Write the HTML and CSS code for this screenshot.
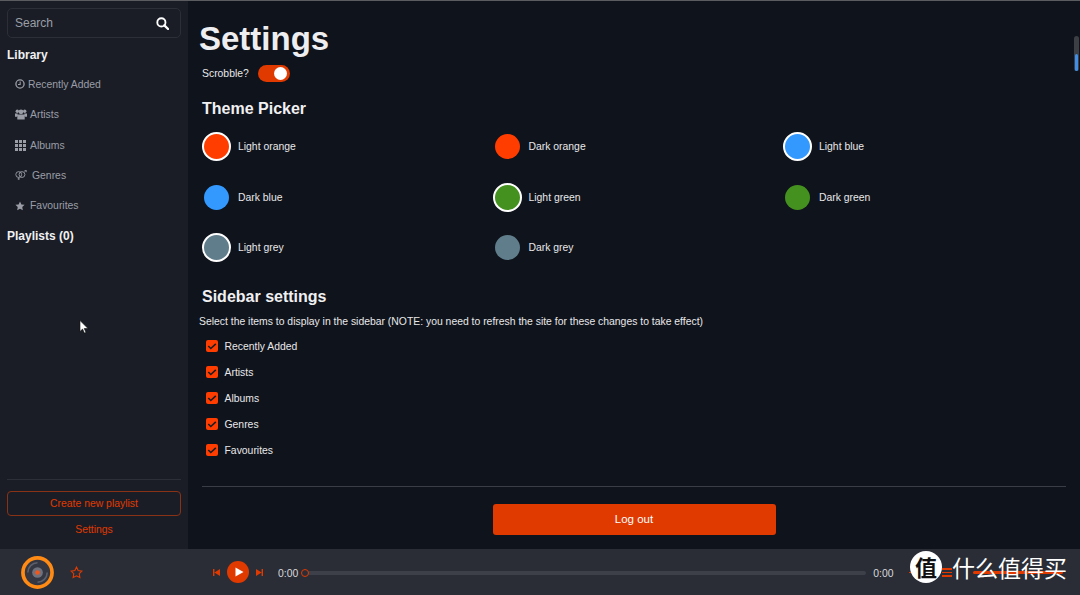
FILE: index.html
```html
<!DOCTYPE html>
<html lang="en">
<head>
    <meta charset="UTF-8">
    <title>Settings</title>
    <link rel="stylesheet" href="styles.css">
</head>
<body>
    <div class="app">
        <div class="content">
            <aside class="sidebar">
                <div class="search">
                    <span>Search</span>
                    <svg class="search-icon" viewBox="0 0 14 14"><circle cx="5.8" cy="5.8" r="4.4" fill="none" stroke="#fff" stroke-width="2"/><path d="M9 9l4 4" stroke="#fff" stroke-width="2.4" stroke-linecap="round"/></svg>
                </div>
                <h4 class="side-title">Library</h4>
                <a class="side-item">
                    <svg class="side-icon" viewBox="0 0 12 12"><circle cx="6" cy="6" r="4.9" fill="none" stroke="#9a9da6" stroke-width="1.6"/><path d="M6.200 3V6.500H3.600" fill="none" stroke="#9a9da6" stroke-width="1.3"/></svg>
                    <span>Recently Added</span>
                </a>
                <a class="side-item">
                    <svg class="side-icon users" viewBox="0 0 12 11"><circle cx="2.300" cy="2.200" r="1.700" fill="#9a9da6"/><circle cx="9.700" cy="2.200" r="1.700" fill="#9a9da6"/><circle cx="6" cy="2.800" r="2.400" fill="#9a9da6"/><path d="M0 4.500h2.800L2 7.800H0zM12 4.500H9.200L10 7.800H12zM3.200 5.600h5.600c.6 0 .9.500.9 1V10.500H2.300V6.600c0-.5.400-1 .9-1z" fill="#9a9da6"/></svg>
                    <span>Artists</span>
                </a>
                <a class="side-item">
                    <svg class="side-icon wide" viewBox="0 0 11 11"><path d="M0 0h3v3H0zM4 0h3v3H4zM8 0h3v3H8zM0 4h3v3H0zM4 4h3v3H4zM8 4h3v3H8zM0 8h3v3H0zM4 8h3v3H4zM8 8h3v3H8z" fill="#9a9da6"/></svg>
                    <span>Albums</span>
                </a>
                <a class="side-item">
                    <svg class="side-icon wider" viewBox="0 0 13 11"><circle cx="4" cy="5" r="3.200" fill="none" stroke="#9a9da6"/><circle cx="7.600" cy="5" r="3.200" fill="none" stroke="#9a9da6"/><path d="M4 8.200v2.600M2.800 9.800h2.400M10 2.600l2-2M10.400.5H12.300V2.400" fill="none" stroke="#9a9da6" stroke-width=".9"/></svg>
                    <span>Genres</span>
                </a>
                <a class="side-item">
                    <svg class="side-icon star" viewBox="0 0 12 12"><path d="M6 .6l1.700 3.500 3.800.5-2.800 2.700.7 3.800L6 9.300l-3.400 1.800.7-3.800L.5 4.600l3.800-.5z" fill="#9a9da6"/></svg>
                    <span>Favourites</span>
                </a>
                <h4 class="side-title playlists">Playlists (0)</h4>
                <div class="side-bottom">
                    <button class="new-playlist">Create new playlist</button>
                    <a class="settings-link">Settings</a>
                </div>
            </aside>

            <main class="main">
                <h1>Settings</h1>
                <div class="scrobble">
                    <span>Scrobble?</span>
                    <div class="toggle"><div class="toggle-thumb"></div></div>
                </div>

                <h3>Theme Picker</h3>
                <div class="themes">
                    <div class="theme"><div class="swatch-box"><div class="swatch orange picked"></div></div>Light orange</div>
                    <div class="theme"><div class="swatch-box"><div class="swatch orange"></div></div>Dark orange</div>
                    <div class="theme"><div class="swatch-box"><div class="swatch blue picked"></div></div>Light blue</div>
                    <div class="theme"><div class="swatch-box"><div class="swatch blue"></div></div>Dark blue</div>
                    <div class="theme"><div class="swatch-box"><div class="swatch green picked"></div></div>Light green</div>
                    <div class="theme"><div class="swatch-box"><div class="swatch green"></div></div>Dark green</div>
                    <div class="theme"><div class="swatch-box"><div class="swatch grey picked"></div></div>Light grey</div>
                    <div class="theme"><div class="swatch-box"><div class="swatch grey"></div></div>Dark grey</div>
                </div>

                <h3 class="sidebar-heading">Sidebar settings</h3>
                <p class="note">Select the items to display in the sidebar (NOTE: you need to refresh the site for these changes to take effect)</p>
                <div class="checks">
                    <div class="check-row"><div class="check"><svg viewBox="0 0 12 12"><path d="M2.300 6l2.500 2.500L9.800 3.800" fill="none" stroke="#1a1d26" stroke-width="1.600"/></svg></div>Recently Added</div>
                    <div class="check-row"><div class="check"><svg viewBox="0 0 12 12"><path d="M2.300 6l2.500 2.500L9.800 3.800" fill="none" stroke="#1a1d26" stroke-width="1.600"/></svg></div>Artists</div>
                    <div class="check-row"><div class="check"><svg viewBox="0 0 12 12"><path d="M2.300 6l2.500 2.500L9.800 3.800" fill="none" stroke="#1a1d26" stroke-width="1.600"/></svg></div>Albums</div>
                    <div class="check-row"><div class="check"><svg viewBox="0 0 12 12"><path d="M2.300 6l2.500 2.500L9.800 3.800" fill="none" stroke="#1a1d26" stroke-width="1.600"/></svg></div>Genres</div>
                    <div class="check-row"><div class="check"><svg viewBox="0 0 12 12"><path d="M2.300 6l2.500 2.500L9.800 3.800" fill="none" stroke="#1a1d26" stroke-width="1.600"/></svg></div>Favourites</div>
                </div>
                <hr class="rule">
                <div class="logout-row"><button class="logout">Log out</button></div>
            </main>
        </div>

        <footer class="player">
            <svg class="disc" viewBox="0 0 34 34">
                <circle cx="17" cy="17" r="15" fill="#343741" stroke="#ff8a14" stroke-width="3.800"/>
                <path d="M17 7a10 10 0 0 0-10 10M17 27a10 10 0 0 0 10-10" fill="none" stroke="#5d606a" stroke-width="1.600"/>
                <circle cx="17" cy="17" r="5.500" fill="#6f727c"/>
                <circle cx="17" cy="17" r="2.400" fill="#f0561a"/>
            </svg>
            <svg class="fav" viewBox="0 0 12 12"><path d="M6 1l1.500 3.200 3.500.5-2.500 2.400.6 3.500L6 9l-3.100 1.600.6-3.500L1 4.700l3.500-.5z" fill="none" stroke="#e03a00" stroke-width="1"/></svg>
            <div class="controls">
                <svg class="skip" viewBox="0 0 8 10"><path d="M0 1h1.600v8H0zM8 1v8L1.600 5z" fill="#e03a00"/></svg>
                <div class="play"><svg viewBox="0 0 10 10"><path d="M1.500 0.500L9.500 5l-8 4.500z" fill="#fff"/></svg></div>
                <svg class="skip" viewBox="0 0 8 10"><path d="M8 1H6.400v8H8zM0 1v8l6.400-4z" fill="#e03a00"/></svg>
            </div>
            <span class="time">0:00</span>
            <div class="track"><div class="track-thumb"></div></div>
            <span class="time end">0:00</span>
        </footer>

        <!-- volume bits under the watermark -->
        <div class="vol-stub"></div>
        <div class="queue-lines"><i></i><i></i><i></i></div>
        <div class="vol-line"></div>
        <div class="watermark">
            <div class="wm-badge">值</div>
            <span class="wm-text">什么值得买</span>
        </div>

        <div class="scrollbar"><div class="scrollbar-fill"></div></div>
        <svg class="cursor" viewBox="0 0 10 14"><path d="M1 .5v11l2.600-2.400 1.800 4 1.600-.7-1.800-3.900H9z" fill="#fff" stroke="#111" stroke-width=".6"/></svg>
    </div>
</body>
</html>
```

FILE: styles.css
```css
* {
    box-sizing: border-box;
}
body {
    margin: 0;
    font-family: "Liberation Sans", Arial, sans-serif;
    font-size: 10.4px;
    color: #e8e8ea;
    background-color: #0f131b;
}
.app {
    position: relative;
    width: 1080px;
    height: 595px;
    display: flex;
    flex-direction: column;
    overflow: hidden;
    border-top: 1px solid #5a5c60;
}
.content {
    flex: 1;
    display: flex;
    min-height: 0;
}

/* sidebar */
.sidebar {
    width: 188px;
    background-color: #1a1d26;
    padding: 7px 7px 0;
    display: flex;
    flex-direction: column;
}
.search {
    height: 30px;
    border: 1px solid #2c2f38;
    border-radius: 5px;
    padding: 0 11px 0 7px;
    display: flex;
    align-items: center;
    justify-content: space-between;
    font-size: 12px;
    color: #9a9da6;
}
.search-icon {
    width: 13px;
    height: 13px;
}
.side-title {
    margin: 10px 0 0;
    font-size: 12px;
    line-height: 14px;
    color: #f0f0f2;
}
.playlists {
    margin-top: 8px;
}
.side-item {
    height: 30.3px;
    padding-left: 8px;
    display: flex;
    align-items: center;
    color: #9a9da6;
}
.side-item:first-of-type {
    margin-top: 7.3px;
}
.side-icon {
    width: 10px;
    height: 10px;
    margin-right: 3px;
}
.side-icon.users {
    width: 12px;
    height: 11px;
    margin-right: 3px;
}
.side-icon.wide {
    width: 11px;
    height: 11px;
    margin-right: 4px;
}
.side-icon.wider {
    width: 12px;
    height: 10px;
    margin-right: 5px;
}
.side-icon.star {
    margin-right: 5px;
}
.side-bottom {
    margin-top: auto;
    border-top: 1px solid #2c2f38;
    padding-top: 11px;
    margin-bottom: 13px;
    display: flex;
    flex-direction: column;
    align-items: center;
}
.new-playlist {
    width: 100%;
    height: 25px;
    border: 1px solid #8a3216;
    border-radius: 4px;
    background: none;
    color: #e03a00;
    font: inherit;
}
.settings-link {
    margin-top: 8px;
    color: #e03a00;
    line-height: 12px;
}

/* main */
.main {
    flex: 1;
    min-width: 0;
    padding: 0 14px 0 11px;
}
h1 {
    margin: 19px 0 0;
    font-size: 33px;
    line-height: 38px;
    color: #eeeef0;
}
.scrobble {
    margin: 7px 0 0 3px;
    height: 17px;
    display: flex;
    align-items: center;
    gap: 9px;
}
.toggle {
    width: 32px;
    height: 17px;
    border-radius: 9px;
    background-color: #e03a00;
    padding: 2px 2px 2px 16px;
}
.toggle-thumb {
    width: 13px;
    height: 13px;
    border-radius: 50%;
    background-color: #fff;
}
h3 {
    margin: 0 0 0 3px;
    font-size: 16px;
    line-height: 18px;
    color: #f0f0f2;
}
.scrobble + h3 {
    margin-top: 18px;
}
.themes {
    margin: 3.4px 0 0 3px;
    display: grid;
    grid-template-columns: 290.5px 290.5px 1fr;
    grid-auto-rows: 50.5px;
    align-items: center;
}
.theme {
    display: flex;
    align-items: center;
    gap: 7px;
}
.swatch-box {
    width: 29px;
    height: 29px;
    display: flex;
    align-items: center;
    justify-content: center;
}
.swatch {
    width: 25px;
    height: 25px;
    border-radius: 50%;
}
.swatch.picked {
    width: 29px;
    height: 29px;
    border: 2px solid #fff;
}
.orange {
    background-color: #ff3d00;
}
.blue {
    background-color: #3399ff;
}
.green {
    background-color: #45911f;
}
.grey {
    background-color: #607d8b;
}
.sidebar-heading {
    margin-top: 15px;
}
.note {
    margin: 10px 0 0;
    line-height: 12px;
}
.checks {
    margin: 6px 0 0 3px;
}
.check-row {
    height: 26px;
    display: flex;
    align-items: center;
    gap: 6.5px;
    padding-left: 4px;
}
.check {
    width: 12px;
    height: 12px;
    margin-bottom: 1px;
    border-radius: 2px;
    background-color: #ff3d00;
}
.check svg {
    display: block;
}
.rule {
    margin: 22px 0 0 3px;
    border: 0;
    border-top: 1px solid #3a3d46;
}
.logout-row {
    margin-top: 17px;
    padding-left: 3px;
    display: flex;
    justify-content: center;
}
.logout {
    width: 283px;
    height: 31px;
    border: 0;
    border-radius: 3px;
    background-color: #e03a00;
    color: #fff;
    font: inherit;
    font-size: 11.5px;
}

/* player */
.player {
    height: 46px;
    background-color: #2a2d36;
    display: flex;
    align-items: center;
    padding-left: 21px;
    font-size: 10.4px;
    color: #d8d8dc;
}
.disc {
    width: 33px;
    height: 33px;
}
.fav {
    width: 13px;
    height: 13px;
    margin-left: 16px;
}
.controls {
    margin-left: 130px;
    display: flex;
    align-items: center;
    gap: 7px;
}
.skip {
    width: 7px;
    height: 9px;
}
.play {
    width: 22px;
    height: 22px;
    border-radius: 50%;
    background-color: #e03a00;
    display: flex;
    align-items: center;
    justify-content: center;
}
.play svg {
    width: 10px;
    height: 10px;
    margin-left: 1px;
}
.time {
    margin: 2px 0 0 15px;
}
.track {
    position: relative;
    width: 561px;
    height: 4px;
    margin: 2px 0 0 7px;
    border-radius: 2px;
    background-color: #3d4049;
}
.track-thumb {
    position: absolute;
    left: -4px;
    top: -2px;
    width: 8px;
    height: 8px;
    border-radius: 50%;
    border: 1.5px solid #e03a00;
    background-color: #2a2d36;
}
.time.end {
    margin-left: 7px;
}

/* things lying over the page */
.vol-stub {
    position: absolute;
    left: 909px;
    top: 571px;
    width: 4px;
    height: 1px;
    background-color: #e03a00;
}
.queue-lines {
    position: absolute;
    left: 942px;
    top: 567px;
    width: 10px;
}
.queue-lines i {
    display: block;
    height: 1.5px;
    margin-bottom: 2px;
    background-color: #e03a00;
}
.vol-line {
    position: absolute;
    left: 973px;
    top: 570px;
    width: 90px;
    height: 3px;
    border-radius: 2px;
    background-color: #e03a00;
}
.watermark {
    position: absolute;
    left: 910px;
    top: 550px;
    display: flex;
    align-items: center;
    gap: 10px;
}
.wm-badge {
    width: 32px;
    height: 32px;
    border-radius: 50%;
    background-color: #fff;
    color: #111;
    font-family: "Noto Sans CJK SC", sans-serif;
    font-weight: 700;
    font-size: 22px;
    line-height: 30px;
    text-align: center;
}
.wm-text {
    font-family: "Noto Sans CJK SC", sans-serif;
    font-size: 23px;
    line-height: 30px;
    color: #fff;
}
.scrollbar {
    position: absolute;
    left: 1074px;
    top: 35px;
    width: 5px;
    height: 35px;
    border-radius: 3px;
    background-color: #3c3f44;
    padding: 18px 1px 0;
}
.scrollbar-fill {
    height: 17px;
    border-radius: 2px;
    background-color: #3f8fe8;
}
.cursor {
    position: absolute;
    left: 79px;
    top: 319px;
    width: 10px;
    height: 14px;
}
```
